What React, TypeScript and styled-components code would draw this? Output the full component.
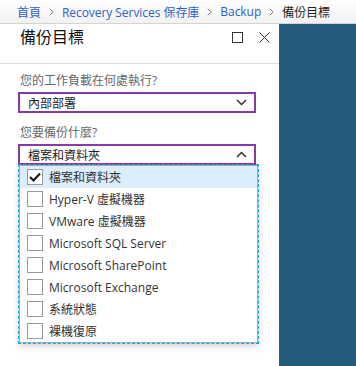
import React from "react";
import styled, { createGlobalStyle } from "styled-components";

const Global = createGlobalStyle`
  html, body { margin: 0; padding: 0; background: #fff; }
  body {
    width: 356px; height: 366px; overflow: hidden;
    font-family: "Open Sans", "Noto Sans CJK TC", sans-serif;
    color: #222;
  }
  * { box-sizing: border-box; }
`;

const Page = styled.div`
  display: flex;
  flex-direction: column;
  width: 356px;
  height: 366px;
`;

const Breadcrumb = styled.nav`
  height: 24px;
  flex: none;
  display: flex;
  align-items: center;
  gap: 8px;
  padding-left: 17px;
  background: linear-gradient(#ffffff, #f1f1f1);
  border-bottom: 1px solid #d4d4d4;
  font-size: 12px;
  letter-spacing: -0.05px;
`;

const Crumb = styled.span<{ $current?: boolean }>`
  color: ${(p) => (p.$current ? "#1e1e1e" : "#2c62c9")};
  white-space: nowrap;
`;

const Sep = styled.svg`
  width: 5px;
  height: 8px;
  flex: none;
`;

const Body = styled.div`
  flex: 1;
  display: flex;
`;

const Blade = styled.section`
  width: 279px;
  flex: none;
  background: #fff;
  display: flex;
  flex-direction: column;
`;

const Backdrop = styled.div`
  flex: 1;
  background: #245a7a;
`;

const Header = styled.header`
  height: 40px;
  flex: none;
  display: flex;
  align-items: flex-start;
  padding: 3px 8px 0 20px;
  border-bottom: 1px solid #dcdcdc;
`;

const Title = styled.h1`
  margin: 0;
  flex: 1;
  font-size: 16px;
  line-height: 20px;
  font-weight: 400;
  color: #111;
`;

const HeaderIcons = styled.div`
  display: flex;
  align-items: center;
  gap: 16px;
  margin-top: 5px;
  padding-right: 1px;
`;

const IconSvg = styled.svg`
  display: block;
`;

const Form = styled.div`
  padding: 9px 23px 0 18px;
  display: flex;
  flex-direction: column;
`;

const Label = styled.div<{ $gap?: number }>`
  font-size: 12px;
  line-height: 16px;
  color: #666;
  padding-left: 2px;
  margin-top: ${(p) => p.$gap ?? 0}px;
  margin-bottom: 3px;
`;

const SelectBox = styled.div`
  position: relative;
  height: 21px;
  border: 2px solid #8a3aa6;
  display: flex;
  align-items: center;
  padding: 0 7px 0 8px;
  font-size: 12px;
  color: #222;
`;

const SelectText = styled.span`
  flex: 1;
`;

const Menu = styled.ul`
  position: absolute;
  top: calc(100% + 2px);
  left: -1px;
  width: 239px;
  margin: 0;
  padding: 0;
  list-style: none;
  background: #fff;
  border: 1px solid #a8a8a8;
  outline: 1px dashed #13a6e6;
  box-shadow: 0 3px 7px rgba(0, 0, 0, 0.18);
  z-index: 2;
`;

const Item = styled.li<{ $active?: boolean }>`
  height: 22px;
  display: flex;
  align-items: center;
  gap: 6px;
  padding-left: 7px;
  background: ${(p) => (p.$active ? "#dcedfc" : "transparent")};
  font-size: 12px;
  color: #333;
`;

const Box = styled.span`
  width: 16px;
  height: 16px;
  flex: none;
  border: 1px solid #9a9a9a;
  background: #fff;
  display: flex;
  align-items: center;
  justify-content: center;
`;

const Chevron = ({ up }: { up?: boolean }) => (
  <IconSvg width="11" height="7" viewBox="0 0 11 7">
    <path
      d={up ? "M1 6 L5.5 1.5 L10 6" : "M1 1 L5.5 5.5 L10 1"}
      fill="none"
      stroke="#333"
      strokeWidth="1.5"
    />
  </IconSvg>
);

const options = [
  "檔案和資料夾",
  "Hyper-V 虛擬機器",
  "VMware 虛擬機器",
  "Microsoft SQL Server",
  "Microsoft SharePoint",
  "Microsoft Exchange",
  "系統狀態",
  "裸機復原",
];

const Separator = () => (
  <Sep viewBox="0 0 5 8">
    <path d="M0.8 0.8 L4.2 4 L0.8 7.2" fill="none" stroke="#8a8a8a" strokeWidth="1" />
  </Sep>
);

export default function App() {
  return (
    <Page>
      <Global />
      <Breadcrumb>
        <Crumb>首頁</Crumb>
        <Separator />
        <Crumb>Recovery Services 保存庫</Crumb>
        <Separator />
        <Crumb>Backup</Crumb>
        <Separator />
        <Crumb $current>備份目標</Crumb>
      </Breadcrumb>
      <Body>
        <Blade>
          <Header>
            <Title>備份目標</Title>
            <HeaderIcons>
              <IconSvg width="11" height="11" viewBox="0 0 11 11">
                <rect x="0.5" y="0.5" width="10" height="10" fill="none" stroke="#333" strokeWidth="1" />
              </IconSvg>
              <IconSvg width="11" height="11" viewBox="0 0 11 11">
                <path d="M0.5 0.5 L10.5 10.5 M10.5 0.5 L0.5 10.5" stroke="#333" strokeWidth="1" />
              </IconSvg>
            </HeaderIcons>
          </Header>
          <Form>
            <Label>您的工作負載在何處執行?</Label>
            <SelectBox>
              <SelectText>內部部署</SelectText>
              <Chevron />
            </SelectBox>
            <Label $gap={12}>您要備份什麼?</Label>
            <SelectBox>
              <SelectText>檔案和資料夾</SelectText>
              <Chevron up />
              <Menu>
                {options.map((o, i) => (
                  <Item key={o} $active={i === 0}>
                    <Box>
                      {i === 0 && (
                        <IconSvg width="12" height="10" viewBox="0 0 12 10">
                          <path d="M1 5 L4.5 8.5 L11 1.5" fill="none" stroke="#111" strokeWidth="2" />
                        </IconSvg>
                      )}
                    </Box>
                    {o}
                  </Item>
                ))}
              </Menu>
            </SelectBox>
          </Form>
        </Blade>
        <Backdrop />
      </Body>
    </Page>
  );
}
